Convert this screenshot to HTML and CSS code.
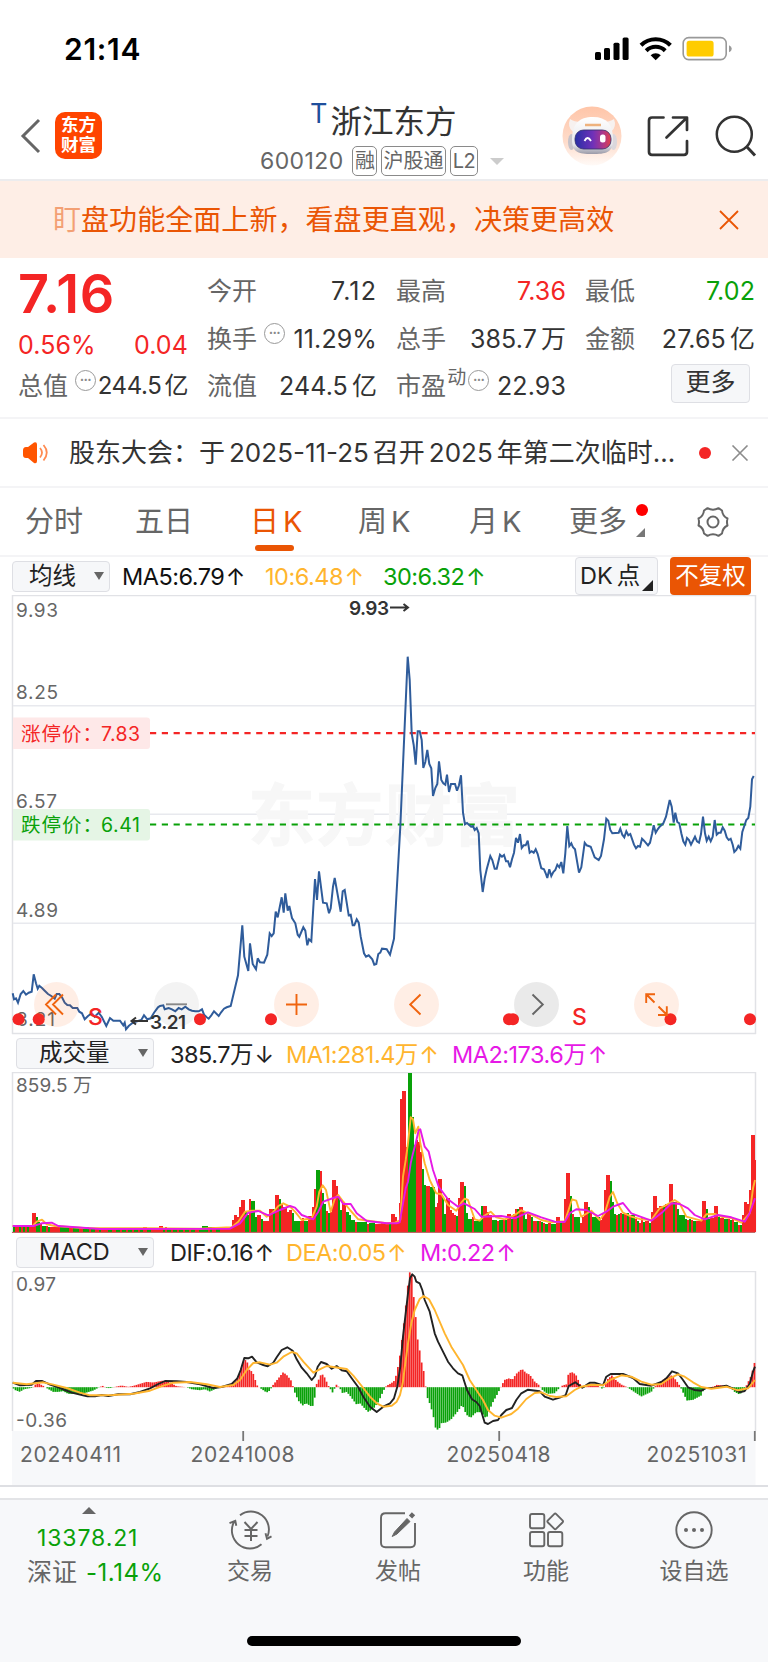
FILE: index.html
```html
<!DOCTYPE html>
<html lang="zh-CN">
<head>
<meta charset="utf-8">
<title>浙江东方 600120</title>
<link rel="stylesheet" href="styles.css">
</head>
<body>
<div class="phone">
  <div class="status">
    <span class="time">21:14</span>
    <svg class="status-icons" width="140" height="26" viewBox="0 0 140 26">
      <g fill="#000"><rect x="1" y="16" width="6" height="8" rx="1.6"/><rect x="10" y="12" width="6" height="12" rx="1.6"/><rect x="19.5" y="6.7" width="6" height="17.3" rx="1.6"/><rect x="28.6" y="1.5" width="6" height="22.5" rx="1.6"/></g>
      <g fill="none" stroke="#000" stroke-width="4.1"><path d="M47 9.2a21 21 0 0 1 29.4 0"/><path d="M52.2 14.7a13.5 13.5 0 0 1 19 0"/></g>
      <path d="M56.6 19.3a7.2 7.2 0 0 1 10.2 0l-5.1 5z"/>
      <rect x="89.2" y="1.6" width="43" height="22" rx="5.5" fill="none" stroke="#999" stroke-width="1.6"/>
      <rect x="92.6" y="4.8" width="27" height="15.7" rx="2.6" fill="#fc0"/>
      <path d="M135 9.2q2.8 1.2 2.8 3.5t-2.8 3.5z" fill="#999"/>
    </svg>
  </div>

  <header class="header">
    <div class="head-left">
      <svg width="22" height="36" viewBox="0 0 22 36"><path d="M19 2L3 18l16 16" fill="none" stroke="#666" stroke-width="3"/></svg>
      <div class="logo">东方<br>财富</div>
    </div>
    <div class="head-mid">
      <div class="title"><span class="title-t">T</span><span>浙江东方</span></div>
      <div class="subtitle"><span class="code">600120</span><span class="badge b1">融</span><span class="badge b2">沪股通</span><span class="badge b3">L2</span><i class="caret"></i></div>
    </div>
    <div class="head-right">
      <svg width="60" height="60" viewBox="0 0 60 60">
        <defs>
          <linearGradient id="halo" x2="0" y2="1"><stop stop-color="#ffc5a8"/><stop offset=".6" stop-color="#fedccb"/><stop offset="1" stop-color="#fffaf7"/></linearGradient>
          <linearGradient id="visor"><stop stop-color="#282fa5"/><stop offset=".5" stop-color="#7031b9"/><stop offset=".8" stop-color="#b13885"/><stop offset="1" stop-color="#e34048"/></linearGradient>
          <linearGradient id="shell" x2="0" y2="1"><stop stop-color="#fff"/><stop offset=".75" stop-color="#e6e6ea"/><stop offset="1" stop-color="#9a9aa8"/></linearGradient>
        </defs>
        <circle cx="30" cy="30" r="29.5" fill="url(#halo)"/>
        <path d="M8 13q-3 8 3 13l8-10q-7 0-11-3zM52 13q3 8-3 13l-8-10q7 0 11-3z" fill="#f7f1ef"/>
        <ellipse cx="9.500" cy="36" rx="3.500" ry="8" fill="#c6c2c9"/><ellipse cx="51.500" cy="36" rx="3.500" ry="8" fill="#dbd7dc"/>
        <path d="M10 34C10 18 17 11 31 11s20 8 20 22-7 15-21 15S10 46 10 34z" fill="url(#shell)"/>
        <rect x="13" y="24" width="36" height="19" rx="8.500" fill="url(#visor)" stroke="#34306b" stroke-width=".8"/>
        <path d="M22.500 35q3-6 6.500 0" fill="none" stroke="#fff" stroke-width="1.800"/><rect x="38" y="28.500" width="5.500" height="8" rx="2.500" fill="#fff"/>
        <path d="M23 19h16" stroke="#eeb27d" stroke-width="2.500"/>
      </svg>
      <svg width="42" height="42" viewBox="0 0 42 42" fill="none" stroke="#333" stroke-width="2.7" stroke-linecap="round" stroke-linejoin="round"><path d="M16.500 2.500H5Q2 2.500 2 5.500V37q0 2.800 3 2.800h32q3 0 3-2.800V26M26 2.500h14V15M39.500 3L19.500 22.500"/></svg>
      <svg width="42" height="42" viewBox="0 0 42 42" fill="none" stroke="#333" stroke-width="2.5"><circle cx="19.300" cy="19.300" r="17.500"/><path d="M32 32l8 8.500" stroke-width="3"/></svg>
    </div>
  </header>

  <div class="banner"><span class="banner-text"><b>盯</b>盘功能全面上新，看盘更直观，决策更高效</span>
    <svg width="20" height="20" viewBox="0 0 20 20"><path d="M1 1l18 18M19 1L1 19" stroke="#ea5504" stroke-width="1.8"/></svg>
  </div>

  <section class="stats">
    <div class="col first">
      <div class="price">7.16</div>
      <div class="pair change"><span>0.56%</span><span>0.04</span></div>
      <div class="pair"><span class="lab">总值<i class="tip">•••</i></span><span class="tight">244.5<u></u>亿</span></div>
    </div>
    <div class="col">
      <div class="pair"><span class="lab">今开</span><span class="wide">7.12</span></div>
      <div class="pair"><span class="lab">换手<i class="tip">•••</i></span><span>11.29%</span></div>
      <div class="pair"><span class="lab">流值</span><span>244.5<u></u>亿</span></div>
    </div>
    <div class="col">
      <div class="pair"><span class="lab">最高</span><span class="up">7.36</span></div>
      <div class="pair"><span class="lab">总手</span><span>385.7<u></u>万</span></div>
      <div class="pair"><span class="lab">市盈<sup>动</sup><i class="tip close">•••</i></span><span>22.93</span></div>
    </div>
    <div class="col">
      <div class="pair"><span class="lab">最低</span><span class="down">7.02</span></div>
      <div class="pair"><span class="lab">金额</span><span>27.65<u></u>亿</span></div>
      <div class="pair more-row"><span class="more">更多</span></div>
    </div>
  </section>

  <div class="notice">
    <svg width="27" height="24" viewBox="0 0 27 24"><path d="M1 9.500Q1 6 4 6h2l6-4.500q3-1 3 2V20q0 3-3 2l-6-5H4q-3 0-3-3z" fill="#ff5500"/><path d="M18 7q4 4.500 0 9.500M21.500 4q6.500 7.500 0 15.500" fill="none" stroke="#ff8a50" stroke-width="1.800"/></svg>
    <span class="notice-text">股东大会：于<u></u>2025-11-25<u></u>召开<u></u>2025<u></u>年第二次临时...</span>
    <i class="red-dot"></i>
    <svg class="notice-x" width="18" height="16" viewBox="0 0 18 16"><path d="M1.500 .5l15 15M16.500 .5l-15 15" stroke="#8c8c8c" stroke-width="1.600"/></svg>
  </div>

  <nav class="tabs">
    <span>分时</span><span>五日</span><span class="active">日<u></u>K</span><span>周<u></u>K</span><span>月<u></u>K</span><span class="tab-more">更多<i class="red-dot"></i><i class="corner"></i></span>
    <svg width="34" height="32" viewBox="0 0 34 32" fill="none" stroke="#666" stroke-width="2"><path d="M11.500 2.200Q17 5.500 22.500 2.200L26 4.500Q26.500 10 31.500 12.500 30.500 16 31.500 19.500 26.500 22 26 27.500L22.500 29.800Q17 26.500 11.500 29.800L8 27.500Q7.500 22 2.500 19.500 3.500 16 2.500 12.500 7.500 10 8 4.500Z" stroke-linejoin="round"/><circle cx="17" cy="16" r="5.500"/></svg>
  </nav>

  <div class="indicators">
    <span class="select s-ma">均线<i></i></span>
    <span class="v ma5">MA5:6.79<u></u>↑</span><span class="v ma10 amber">10:6.48<u></u>↑</span><span class="v ma30 down">30:6.32<u></u>↑</span>
    <span class="dk">DK<u></u>点</span><span class="adj">不复权</span>
  </div>

  <svg class="chart" id="kline" width="768" height="440" viewBox="0 595 768 440">
    <path class="frame" d="M12.500 1034V595.500H755.500V1034M12 1033.500H756"/>
    <path class="grid" d="M13 705.700H755M13 814.300H755M13 923.200H755"/>
    <text class="water" x="248" y="840" textLength="272">东方财富</text>
    <g class="axis"><text x="16" y="617" textLength="42">9.93</text><text x="16" y="699" textLength="42">8.25</text><text x="16" y="808" textLength="41">6.57</text><text x="16" y="917" textLength="42">4.89</text><text x="16" y="1026" textLength="39">3.21</text></g>
    <path d="M13 717.500h134q3 0 3 3V746q0 3-3 3H13z" fill="#fee8e8"/>
    <path d="M13 809h134q3 0 3 3v25.500q0 3-3 3H13z" fill="#e5f5e5"/>
    <g class="limit"><text x="21" y="740.500" fill="#f42525" textLength="81">涨停价：</text><text x="101" y="740.500" fill="#f42525" textLength="39">7.83</text><text x="21" y="832" fill="#09a109" textLength="81">跌停价：</text><text x="101" y="832" fill="#09a109" textLength="39">6.41</text></g>
    <g fill="none" stroke-width="2.200" stroke-dasharray="6.200 5.600"><path d="M150 733.200H755" stroke="#f42525"/><path d="M150 824.500H755" stroke="#09a109"/></g>
    <polyline id="price" fill="none" stroke="#2f5c9b" stroke-width="2" stroke-linejoin="miter" stroke-miterlimit="3"/>
    <g class="mark"><text x="349" y="614.500" textLength="40">9.93</text><text x="150" y="1029" textLength="36">3.21</text></g>
    <g fill="none" stroke="#333" stroke-width="2"><path d="M390 607.500h17M403.500 604l4.500 3.500-4.500 3.500M148 1021h-16M136 1017.500l-4.500 3.500 4.500 3.500"/></g>
    <g class="events"><text x="88" y="1025">S</text><text x="572" y="1025">S</text><circle cx="18.500" cy="1019.300" r="6"/><circle cx="38.700" cy="1019.300" r="6"/><circle cx="200" cy="1019.300" r="6"/><circle cx="271" cy="1019.300" r="6"/><circle cx="509" cy="1019.300" r="6"/><circle cx="513" cy="1019.300" r="6"/><circle cx="670.500" cy="1019.300" r="6"/><circle cx="750" cy="1019.300" r="6"/></g>
    <g fill="#ff5a00" fill-opacity=".1"><circle cx="56.500" cy="1004.500" r="22.500"/><circle cx="296.500" cy="1004.500" r="22.500"/><circle cx="416.500" cy="1004.500" r="22.500"/><circle cx="656.500" cy="1004.500" r="22.500"/></g>
    <g fill="#333" fill-opacity=".1"><circle cx="176.500" cy="1004.500" r="22.500" fill-opacity=".06"/><circle cx="536.500" cy="1004.500" r="22.500"/></g>
    <g fill="none" stroke="#f0640f" stroke-width="1.900"><path d="M56 994.500L46 1004.500l10 10M63 994.500L53 1004.500l10 10M286 1004.500h21M296.500 994v21M420.500 994.500l-10.300 10 10.300 10M655 994.300h-8.800v8.800M647 995l7.500 7.500M658 1015h8.800v-8.800M666 1014l-7.500-7.500"/></g>
    <g fill="none" stroke="#666" stroke-width="1.900"><path d="M532.500 994.500l10.300 10-10.300 10"/><path d="M166 1004.300h21" stroke="#888"/></g>
  </svg>

  <div class="indicators sub">
    <span class="select">成交量<i></i></span><span class="v c1">385.7万<u></u>↓</span><span class="v c2 amber">MA1:281.4万<u></u>↑</span><span class="v c3 magenta">MA2:173.6万<u></u>↑</span>
  </div>
  <svg class="chart" width="768" height="162" viewBox="0 1072 768 162">
    <path class="frame" d="M12.500 1233V1072.500H755.500V1233"/>
    <g class="axis"><text x="16" y="1091.500" textLength="76">859.5 万</text></g>
    <g id="volume" shape-rendering="crispEdges"></g>
    <polyline id="vma1" class="line" stroke="#ffb52e"/><polyline id="vma2" class="line" stroke="#e619e6"/>
    <path d="M12 1232.400H755" stroke="#b55" stroke-width="1"/>
  </svg>

  <div class="indicators sub">
    <span class="select">MACD<i></i></span><span class="v c1">DIF:0.16<u></u>↑</span><span class="v d2 amber">DEA:0.05<u></u>↑</span><span class="v d3 magenta">M:0.22<u></u>↑</span>
  </div>
  <svg class="chart" width="768" height="216" viewBox="0 1271 768 216">
    <rect x="12" y="1431" width="743.500" height="54" fill="#f7f8fa"/>
    <path class="frame" d="M12.500 1431V1271.500H755.500V1431"/>
    <g class="axis"><text x="16" y="1291" textLength="40">0.97</text><text x="16" y="1427" textLength="51">-0.36</text></g>
    <g id="hist"></g>
    <polyline id="dif" class="line" stroke="#222"/><polyline id="dea" class="line" stroke="#ffb52e"/>
    <path d="M243.200 1431v10M499.200 1431v10M754.800 1431v10" stroke="#777" stroke-width="1.800"/>
    <g class="dates"><text x="20" y="1462" textLength="101">20240411</text><text x="190.500" y="1462" textLength="104">20241008</text><text x="446.500" y="1462" textLength="104">20250418</text><text x="646.500" y="1462" textLength="100">20251031</text></g>
    <path d="M0 1486H768" stroke="#dedfe3" stroke-width="1.800"/>
  </svg>

  <footer class="dock">
    <div class="index"><i class="tri"></i><span class="down">13378.21</span><span class="idx2">深证 <em class="down">-1.14%</em></span></div>
    <div class="item"><svg width="44" height="40" viewBox="0 0 44 40" fill="none" stroke="#666" stroke-width="1.900"><path d="M12 5.200A18 18 0 0 1 39.500 26.500M33.500 34.200A18 18 0 0 1 6 12M1.500 13.200l5.800-2.400 1 5M43.500 26.300l-4.500 2.500-1.500-5.500"/><path d="M16.500 12l6.500 7 6.500-7M23 19v12M16.500 20h13M16.500 26h13" stroke-width="2"/></svg><span>交易</span></div>
    <div class="item"><svg width="44" height="40" viewBox="0 0 44 40" fill="none" stroke="#666" stroke-width="1.900"><path d="M29 3.200H9.500q-4.500 0-4.500 4.500v25q0 4.500 4.500 4.500h25q4.500 0 4.500-4.500V13"/><path d="M31 8.500l3 3L21 24l-4.800 2.500L18.500 22z" fill="#666" stroke-width="1"/><path d="M34.500 7l3-3.200" stroke-width="4.500"/></svg><span>发帖</span></div>
    <div class="item"><svg width="44" height="40" viewBox="0 0 44 40" fill="none" stroke="#666" stroke-width="1.900"><rect x="6" y="4" width="14.300" height="14.300" rx="2"/><rect x="6" y="22" width="14.300" height="14.300" rx="2"/><rect x="24" y="22" width="14.300" height="14.300" rx="2"/><rect x="25.300" y="5.500" width="11.800" height="11.800" rx="1.500" transform="rotate(45 31.200 11.400)"/></svg><span>功能</span></div>
    <div class="item"><svg width="44" height="40" viewBox="0 0 44 40"><circle cx="22" cy="20" r="17.700" fill="none" stroke="#666" stroke-width="1.900"/><g fill="#666"><circle cx="14" cy="20" r="2"/><circle cx="22" cy="20" r="2"/><circle cx="30" cy="20" r="2"/></g></svg><span>设自选</span></div>
    <i class="home"></i>
  </footer>
</div>
<script src="chart.js"></script>
</body>
</html>
```
FILE: styles.css
```css
* { box-sizing: border-box; }
body { margin: 0; background: #fff; font-family: Inter, "Noto Sans CJK SC", sans-serif; color: #333; }
i, em { font-style: normal; }
u { display: inline-block; width: 4px; text-decoration: none; }
.phone { width: 768px; height: 1663px; overflow: hidden; display: flex; flex-direction: column; }
.phone > * { flex: none; }
.up { color: #f42525; }
.down { color: #09a109; }
.amber { color: #ffb52e; }
.magenta { color: #e619e6; }

.status { height: 100px; padding: 31px 34px 0 64px; display: flex; justify-content: space-between; }
.time { color: #000; font-size: 30px; font-weight: 600; line-height: 36px; letter-spacing: .7px; }
.status-icons { margin-top: 5px; }

.header { height: 81px; border-bottom: 2px solid #ececee; display: grid; grid-template-columns: 250px 270px 248px; }
.head-left { display: flex; align-items: flex-start; padding: 12px 0 0 20px; gap: 13px; }
.head-left svg { margin-top: 6px; }
.logo { width: 47px; height: 47px; border-radius: 10px; background: #ff4400; color: #fff; font-size: 17.500px; font-weight: 700; line-height: 19.500px; text-align: center; padding-top: 3px; }
.title { display: flex; align-items: flex-start; padding-left: 60px; height: 43px; font-size: 31.500px; line-height: 43px; gap: 3px; }
.title-t { color: #1f4f9c; font-size: 27px; line-height: 27px; }
.subtitle { display: flex; align-items: center; padding-left: 10px; height: 32px; margin-top: 2px; color: #666; }
.code { width: 92px; font-size: 23px; letter-spacing: .4px; }
.badge { border: 1.500px solid #8a8a8a; border-radius: 5px; height: 30px; line-height: 29px; font-size: 20px; text-align: center; margin-right: 4px; }
.b1 { width: 25px; padding-left: 1px; } .b2 { width: 65px; } .b3 { width: 28px; letter-spacing: -.5px; }
.caret { border: 7px solid transparent; border-top-color: #ccc; border-bottom: 0; margin-left: 8px; }
.head-right { display: flex; align-items: flex-start; padding: 6px 0 0 42px; }
.head-right svg:nth-child(2) { margin: 9px 0 0 25px; }
.head-right svg:nth-child(3) { margin: 9px 0 0 26px; }

.banner { height: 77px; background: #feeee6; display: flex; justify-content: space-between; align-items: center; padding: 0 29px 0 53px; color: #ea5504; font-size: 28px; }
.banner-text { line-height: 40px; letter-spacing: .06px; }
.banner b { font-weight: 400; opacity: .5; }

.stats { height: 161px; border-bottom: 2px solid #f4f4f6; display: grid; grid-template-columns: 170px 170px 170px 170px; column-gap: 19px; padding: 10px 0 0 18px; }
.col { display: grid; grid-template-columns: 170px; grid-template-rows: 48px 47px 47px; font-size: 25px; }
.first { grid-template-rows: 55px 40px 47px; }
.pair { display: flex; justify-content: space-between; line-height: 46px; white-space: nowrap; letter-spacing: .1px; }
.wide { letter-spacing: 1.100px; }
.tight { font-size: 24px; letter-spacing: -.4px; }
.tight u { width: 3px; }
.change { color: #f42525; line-height: 44px; }
.price { color: #f42525; font-size: 54px; font-weight: 600; line-height: 52px; letter-spacing: .7px; }
.lab { color: #666; display: flex; }
.tip { width: 21px; height: 21px; border: 1.500px solid #999; border-radius: 50%; margin: 7px 0 0 7px; color: #888; font-size: 7px; line-height: 18px; text-align: center; letter-spacing: -.2px; }
.tip.close { margin-left: 2px; }
sup { font-size: 19px; line-height: 30px; vertical-align: top; padding-left: 1px; }
.more-row { justify-content: flex-end; padding-right: 5px; }
.more { width: 79px; height: 39px; margin-top: 1px; border: 1.500px solid #dedfe4; border-radius: 4px; background: #f6f7f9; line-height: 35px; text-align: center; }

.notice { height: 69px; border-bottom: 2px solid #f4f4f6; display: flex; align-items: center; padding-left: 22px; }
.notice-text { width: 630px; margin-left: 20px; font-size: 26px; line-height: 40px; white-space: nowrap; letter-spacing: 0; }
.red-dot { width: 12px; height: 12px; border-radius: 50%; background: #f42525; }
.notice-x { margin-left: 20px; }

.tabs { height: 69px; border-bottom: 2px solid #f4f4f6; display: flex; align-items: center; padding: 0 0 0 25px; color: #666; font-size: 29px; line-height: 66px; }
.tabs span { position: relative; white-space: nowrap; }
.tabs span:nth-child(1) { width: 110px; } .tabs span:nth-child(2) { width: 115px; } .tabs span:nth-child(3) { width: 108px; } .tabs span:nth-child(4) { width: 111px; } .tabs span:nth-child(5) { width: 100px; } .tabs .tab-more { width: 127px; }
.tabs .active { color: #ea5504; }
.active::after { content: ""; position: absolute; left: 5px; top: 56px; width: 39px; height: 6px; border-radius: 3px; background: #ea5504; }
.tab-more .red-dot { position: absolute; left: 67px; top: 15px; background: #f00; }
.corner { position: absolute; left: 67px; top: 39px; border-left: 9px solid transparent; border-bottom: 9px solid #777; }

.indicators { height: 38px; display: flex; align-items: center; padding: 0 17px 0 12px; font-size: 23.500px; white-space: nowrap; color: #222; }
.select { width: 98px; height: 31px; border: 1.500px solid #dedfe4; border-radius: 4px; background: #f6f7f9; line-height: 28px; padding-left: 16px; display: flex; align-items: center; justify-content: space-between; padding-right: 5px; }
.select i { border: 5px solid transparent; border-top: 8px solid #666; border-bottom: 0; }
.v { letter-spacing: -.5px; }
.v u { width: 1.500px; }
.ma5 { margin-left: 12px; width: 143px; color: #111; } .ma10 { width: 118px; } .ma30 { width: 192px; }
.dk { position: relative; width: 83px; height: 38px; border: 1.500px solid #dedfe4; border-radius: 4px; background: #f6f7f9; line-height: 36px; padding-left: 4px; }
.dk::after { content: ""; position: absolute; right: 4px; bottom: 3px; border-left: 11px solid transparent; border-bottom: 11px solid #222; }
.adj { width: 81px; height: 38px; margin-left: 12px; border-radius: 4px; background: #ea5504; color: #fff; line-height: 37px; text-align: center; }
.sub { height: 37px; padding: 0 0 1px 16px; }
.sub .select { width: 138px; padding-left: 22px; }
.c1 { margin-left: 16px; width: 116px; } .c2 { width: 166px; } .d2 { width: 134px; }

.chart { display: block; font-size: 19px; }
.frame { fill: none; stroke: #e1e2e6; stroke-width: 1.500; }
.grid { fill: none; stroke: #e8e9ee; stroke-width: 1.600; }
.axis { fill: #666; }
.limit { font-size: 19.500px; }
.water { font-size: 67px; font-weight: 700; fill: #f7f7f7; stroke: #f7f7f7; stroke-width: 1; }
.mark { font-weight: 600; font-size: 19px; fill: #333; }
.events { fill: #f42525; font-size: 23px; font-weight: 500; }
.line { fill: none; stroke-width: 1.900; stroke-linejoin: round; }
.dates { font-size: 21px; fill: #666; }

.dock { position: relative; height: 164px; margin-top: 11px; border-top: 2px solid #e3e4e7; background: #f7f8fa; display: grid; grid-template-columns: 176px 148px 148px 148px 148px; color: #666; }
.index { display: flex; flex-direction: column; font-size: 23px; padding-left: 27px; line-height: 34px; }
.index > .down { padding-left: 10px; margin-top: 7px; letter-spacing: .9px; }
.tri { align-self: flex-start; margin: 7px 0 0 55px; border: 7px solid transparent; border-bottom-color: #666; border-top: 0; }
.idx2 { font-size: 25px; white-space: nowrap; }
.idx2 em { margin-left: 2px; font-size: 24px; letter-spacing: .5px; }
.item { display: flex; flex-direction: column; align-items: center; padding-top: 10px; font-size: 23px; line-height: 40px; }
.item span { margin-top: 1px; }
.home { position: absolute; left: 247px; top: 136px; width: 274px; height: 10px; border-radius: 5px; background: #000; }
```
FILE: chart.js
```js
// Series are stored on a 3x grid: x from the left edge, y from each panel's origin.
const NS = 'http://www.w3.org/2000/svg';
const RIGHT = 1104;

function parse(text, dx = 0) {
  return text.trim().split(/\s+/).map(p => {
    const [x, y, c] = p.split(',');
    return [+x + dx, +y, c];
  });
}
function series(left, right) { return parse(left).concat(parse(right, RIGHT)); }
function line(id, top, points) {
  document.getElementById(id).setAttribute('points',
    points.map(p => (p[0] / 3).toFixed(1) + ',' + (top + p[1] / 3).toFixed(1)).join(' '));
}
function rect(parent, x, y, w, h, fill) {
  const r = document.createElementNS(NS, 'rect');
  const a = { x, y, width: w, height: h, fill };
  for (const k in a) r.setAttribute(k, a[k]);
  parent.appendChild(r);
}

line('price', 640, series(
`38,1060 42,1078 48,1075 54,1088 62,1062 70,1053 78,1064 86,1058 95,1055 101,1003 108,1030 113,1046 118,1037 126,1044 134,1052 144,1062 154,1068 164,1076 170,1062 178,1062 186,1072 194,1088 202,1095 210,1096 218,1104 232,1104 238,1115 246,1120 254,1138 264,1128 275,1120 284,1130 296,1118 305,1130 319,1158 330,1134 340,1142 350,1142 360,1142 370,1156 374,1148 378,1168 386,1158 396,1150 404,1146 414,1143 424,1140 432,1126 442,1138 452,1135 462,1118 474,1102 480,1098 490,1096 494,1108 506,1104 516,1108 526,1114 536,1104 545,1108 556,1100 566,1108 576,1112 586,1114 596,1114 606,1108 612,1124 620,1132 626,1136 634,1126 642,1114 656,1128 664,1116 672,1106 680,1102 692,1098 714,1006 727,856 733,950 745,993 750,910 758,972 768,988 773,955 780,967 792,968 802,944 809,880 815,888 821,880 827,815 833,832 845,772 851,818 856,760 863,812 868,798 876,834 886,850 893,884 898,890 910,862 916,872 922,916 927,898 934,904 945,717 951,780 957,694 969,788 980,790 987,820 992,805 999,740 1004,714 1016,782 1022,815 1028,754 1034,750 1046,826 1052,824 1058,856 1063,856 1070,838 1076,848 1082,890 1092,940 1098,950 1106,946 1117,958 1123,974 1129,972 1135,942 1141,938 1146,926 1160,928`,
`66,944 78,896 97,560 119,50 125,120 131,280 137,315 143,374 149,274 155,274 161,300 166,384 172,366 178,330 184,372 190,385 195,468 202,444 208,432 213,364 220,420 226,430 232,434 237,404 243,456 249,432 261,432 267,452 273,436 279,406 285,518 291,553 297,549 309,560 315,558 320,570 326,564 332,580 337,690 344,756 350,715 356,688 367,648 373,660 380,686 386,686 396,644 402,650 408,645 414,664 420,664 426,682 432,658 438,638 444,594 450,608 456,582 461,624 467,616 473,616 479,602 485,638 491,634 497,638 503,628 509,642 520,685 528,688 533,700 538,714 544,688 550,708 556,696 562,690 568,674 574,682 580,666 586,700 592,640 598,558 604,618 610,610 615,622 621,628 633,698 640,682 650,608 656,616 668,620 680,652 692,660 699,648 708,598 715,536 721,542 727,570 733,580 752,578 757,566 763,584 769,592 775,574 781,586 787,582 798,614 804,625 810,618 816,620 822,596 828,602 840,616 846,608 852,582 857,556 863,578 869,568 875,560 886,550 894,530 905,480 911,500 917,548 922,518 928,546 934,550 940,580 946,604 952,614 957,594 963,600 969,614 981,590 987,604 993,608 999,582 1005,530 1011,580 1016,602 1022,590 1028,604 1034,590 1040,540 1046,584 1052,578 1058,578 1064,562 1070,572 1076,592 1082,600 1088,596 1094,614 1099,636 1105,630 1111,618 1117,626 1123,576 1135,540 1141,534 1147,500 1152,418 1157,408`));

const volume = series(
`38,588,g 44,584,r 56,588,g 62,586,r 68,588,g 74,586,r 80,588,g 86,588,r 97,548,r 109,560,g 115,575,g 121,582,r 127,588,g 139,588,r 145,590,g 151,590,r 163,592,r 180,592,g 206,594,r 218,594,g 236,595,r 248,592,g 266,596,r 272,596,g 284,597,r 296,597,g 302,598,r 325,598,g 337,598,r 349,598,g 361,598,r 367,598,g 378,598,r 384,597,g 396,597,r 402,597,g 414,597,r 420,597,g 429,590,r 441,594,g 452,594,r 476,588,r 488,594,g 494,592,r 500,594,g 512,594,r 518,595,g 530,595,r 536,596,g 548,596,r 554,597,g 566,597,r 572,597,g 584,597,r 596,596,g 607,588,g 623,592,r 629,590,g 635,592,r 649,592,g 659,594,r 695,571,r 701,554,r 712,562,r 718,531,r 724,510,r 736,546,g 742,555,g 748,508,r 754,514,g 766,560,g 771,556,r 783,568,g 789,574,r 807,538,r 818,538,g 824,494,r 836,507,g 842,522,r 848,530,r 860,545,r 866,540,r 877,548,g 883,573,g 900,572,r 906,564,r 912,572,g 924,557,r 936,532,r 942,478,r 948,419,g 959,424,r 965,488,g 971,522,g 977,542,r 983,550,g 989,546,r 995,450,r 1007,468,r 1013,500,g 1019,540,g 1025,520,r 1037,545,g 1048,556,g 1054,570,g 1066,575,r 1072,575,g 1102,582,r 1108,580,g 1125,582,r 1143,575,r 1149,582,r 1155,582,r 1167,580,g 1173,551,r 1184,560,r 1190,575,r 1197,519,r`,
`97,206,r 103,183,r 115,350,r 121,129,g 133,262,g 139,345,g 145,330,r 151,335,r 157,365,r 163,418,g 169,465,g 175,468,r 187,470,g 200,532,r 206,518,r 210,447,r 222,500,g 228,552,g 233,504,r 245,540,r 251,548,r 257,556,r 263,558,g 269,503,r 275,457,r 287,469,g 293,548,g 299,568,g 311,562,r 317,572,g 340,528,g 346,528,r 358,545,r 364,556,r 373,570,g 388,572,r 394,570,g 406,568,r 412,570,g 418,552,r 430,568,g 436,552,r 441,536,r 447,536,g 453,530,r 465,545,g 470,568,g 476,550,r 488,560,g 494,574,r 506,572,g 512,572,r 518,575,g 524,578,r 530,582,g 540,580,r 550,582,g 565,562,r 577,578,g 583,578,r 589,508,r 595,429,r 606,498,g 612,552,r 618,560,g 635,578,r 641,560,r 647,515,r 659,532,g 665,550,r 671,562,g 696,570,r 702,548,r 707,480,r 713,436,r 725,452,g 731,515,g 737,552,g 743,556,r 749,552,g 755,550,r 761,552,g 767,550,r 778,550,g 784,556,r 790,556,g 802,566,r 808,573,g 814,578,r 820,562,r 826,576,g 832,572,r 843,578,g 848,546,r 854,497,r 866,535,r 872,528,r 884,530,g 890,522,r 902,463,r 914,515,g 920,517,r 926,538,g 932,554,g 950,566,g 956,570,r 962,568,g 968,570,r 974,572,g 985,572,r 1002,513,r 1014,538,g 1020,568,g 1026,565,r 1038,527,r 1050,562,g 1056,565,r 1062,555,r 1068,568,g 1080,568,r 1086,570,g 1092,568,r 1098,575,g 1110,585,r 1116,585,g 1122,556,r 1128,516,r 1137,522,r 1143,480,r 1149,315,r 1161,390,r 1163,607,r`);
const vol = document.getElementById('volume');
for (let i = 0; i < volume.length - 1; i++) {
  const [x, y, c] = volume[i];
  rect(vol, x / 3, 1030 + y / 3, (volume[i + 1][0] - x) / 3, (607 - y) / 3, c === 'r' ? '#f42525' : '#09a109');
}
line('vma1', 1030, series(
`38,588 98,588 110,575 126,569 140,583 165,588 250,594 450,595 600,596 695,592 715,575 735,545 755,542 780,542 800,560 818,548 835,528 850,520 870,530 885,545 905,570 935,565 950,530 958,485 968,466 978,480 992,545 1005,505 1015,495 1030,515 1050,540 1075,568 1110,573 1160,580 1185,578`,
`97,570 105,440 113,390 120,340 128,262 135,268 142,310 151,290 157,340 170,400 185,450 205,490 220,493 240,525 265,542 280,518 290,506 300,510 320,568 335,572 348,558 368,545 385,562 410,568 430,560 448,550 460,541 490,554 520,570 550,577 590,574 600,545 612,508 625,512 640,560 670,542 695,570 710,550 725,500 735,486 748,520 765,548 790,560 820,568 850,570 875,535 895,525 920,510 935,520 955,560 1000,572 1015,553 1040,552 1060,560 1090,564 1120,578 1145,550 1155,475 1161,450`));
line('vma2', 1030, series(
`38,588 100,588 125,580 155,578 175,588 300,597 690,596 720,580 745,548 775,543 805,556 840,540 870,528 885,533 905,555 940,568 955,545 970,515 1000,504 1015,500 1030,522 1052,522 1070,550 1100,573 1160,580 1190,580`,
`95,577 105,520 113,475 120,455 128,400 135,370 143,340 152,300 157,298 170,350 182,365 195,420 212,470 240,508 270,530 288,520 320,537 340,560 400,558 440,565 480,547 520,562 560,575 590,576 605,550 625,538 655,540 690,558 715,545 735,530 765,519 790,550 850,572 885,545 910,520 935,522 960,535 980,555 1010,568 1050,555 1090,562 1130,575 1145,550 1161,505`));

const envelope = series(
`38,0 44,-8 60,-14 72,-6 95,-2 100,0 103,6 115,12 130,4 136,0 146,-6 160,-14 175,-14 190,-12 205,-20 240,-20 260,-16 280,-10 298,0 308,4 320,-2 330,-3 345,1 365,5 385,1 400,4 420,10 440,16 460,14 490,20 510,14 530,3 560,0 575,-6 600,-9 615,-6 630,-13 645,-6 660,0 690,4 705,15 715,30 724,55 733,85 742,75 750,46 757,50 763,30 772,5 783,-4 800,-16 810,-10 818,5 830,20 850,45 862,35 875,18 883,-12 895,-40 908,-55 918,-48 935,-58 942,-54 948,5 955,20 965,42 975,28 985,5 998,-16 1010,8 1020,-3 1028,-18 1040,-14 1050,-25 1070,-52 1080,-48 1104,-74 1120,-65 1135,-45 1150,-12 1158,2`,
`57,5 70,12 80,20 87,45 95,88 101,135 107,185 113,238 119,300 125,345 131,340 137,275 143,215 149,145 155,112 161,75 167,50 173,3 178,-30 186,-50 195,-80 203,-122 212,-130 220,-108 235,-106 250,-96 270,-72 283,-52 295,-82 308,-92 325,-75 340,-75 355,-95 362,-75 375,-45 390,-18 400,3 410,22 425,27 433,22 445,40 462,55 475,42 485,38 500,17 515,5 525,-10 540,-20 560,-18 575,-2 585,6 595,8 602,42 615,45 625,35 635,12 645,-4 655,3 670,10 690,5 705,-6 712,5 720,25 733,36 745,20 760,8 778,0 790,-8 820,-28 850,-14 858,-2 865,6 890,25 912,36 925,20 936,4 945,-15 957,-40 975,-38 1000,-25 1010,0 1020,-3 1040,3 1047,7 1070,5 1085,2 1100,-14 1115,-22 1128,-8 1136,6 1150,35 1161,78`);
const hist = document.getElementById('hist');
let k = 0;
for (let n = 0; n < 375; n++) {
  const x = 38 + (n + 0.5) * 5.943;
  while (k < envelope.length - 2 && envelope[k + 1][0] < x) k++;
  const [x0, v0] = envelope[k], [x1, v1] = envelope[k + 1];
  const v = v0 + (v1 - v0) * Math.min(1, (x - x0) / (x1 - x0));
  const h = Math.abs(v) / 3;
  rect(hist, x / 3 - 0.95, v > 0 ? 1387.2 - h : 1387.2, 1.75, h, v > 0 ? '#f42525' : '#09a109');
}
line('dif', 1230, series(
`38,458 60,466 95,464 108,453 127,453 150,464 175,472 195,480 215,488 240,494 262,499 285,499 305,495 325,498 355,493 390,493 420,486 450,475 475,462 495,453 530,454 560,456 600,463 640,474 665,471 695,462 712,445 722,420 733,384 745,385 756,380 770,397 790,405 803,409 820,398 830,382 845,360 862,352 878,362 890,388 905,413 920,430 935,450 945,438 953,410 963,396 980,402 995,416 1010,408 1025,421 1040,424 1055,445 1075,472 1090,500 1110,530 1130,546 1150,530 1170,520 1182,505`,
`88,470 97,410 105,320 112,260 120,190 126,145 133,133 140,140 145,155 155,160 163,180 170,210 185,245 200,310 210,335 225,365 240,395 255,415 270,430 283,436 297,480 312,508 325,516 335,528 350,578 360,582 375,573 390,570 400,555 415,540 432,534 445,510 460,490 480,479 515,484 530,500 555,509 575,503 593,495 602,468 622,457 643,473 665,458 680,458 705,466 715,440 728,432 765,432 795,444 815,462 850,467 880,456 895,445 912,424 930,430 945,450 960,472 980,480 1000,482 1015,474 1040,473 1075,467 1100,478 1115,487 1130,483 1145,462 1155,425 1161,410`));
line('dea', 1230, series(
`38,458 80,463 130,457 160,464 200,474 240,488 270,496 300,496 340,495 400,491 450,482 490,467 520,458 570,456 620,463 660,471 700,465 720,450 740,420 760,399 780,397 810,404 830,398 850,380 875,366 890,370 910,395 940,428 965,415 980,408 1000,411 1040,417 1060,437 1090,474 1110,500 1130,520 1150,530 1175,527 1190,515`,
`96,495 104,460 112,400 120,340 130,280 140,240 155,207 167,198 183,208 200,240 230,310 250,350 285,405 305,450 325,480 345,510 360,540 380,557 400,563 430,552 450,536 475,507 500,489 520,487 545,498 565,501 595,499 620,480 640,470 670,464 705,466 730,448 760,436 790,440 820,455 850,464 880,462 905,445 930,433 950,440 975,457 1000,471 1030,476 1075,470 1110,481 1140,475 1161,450`));
```
